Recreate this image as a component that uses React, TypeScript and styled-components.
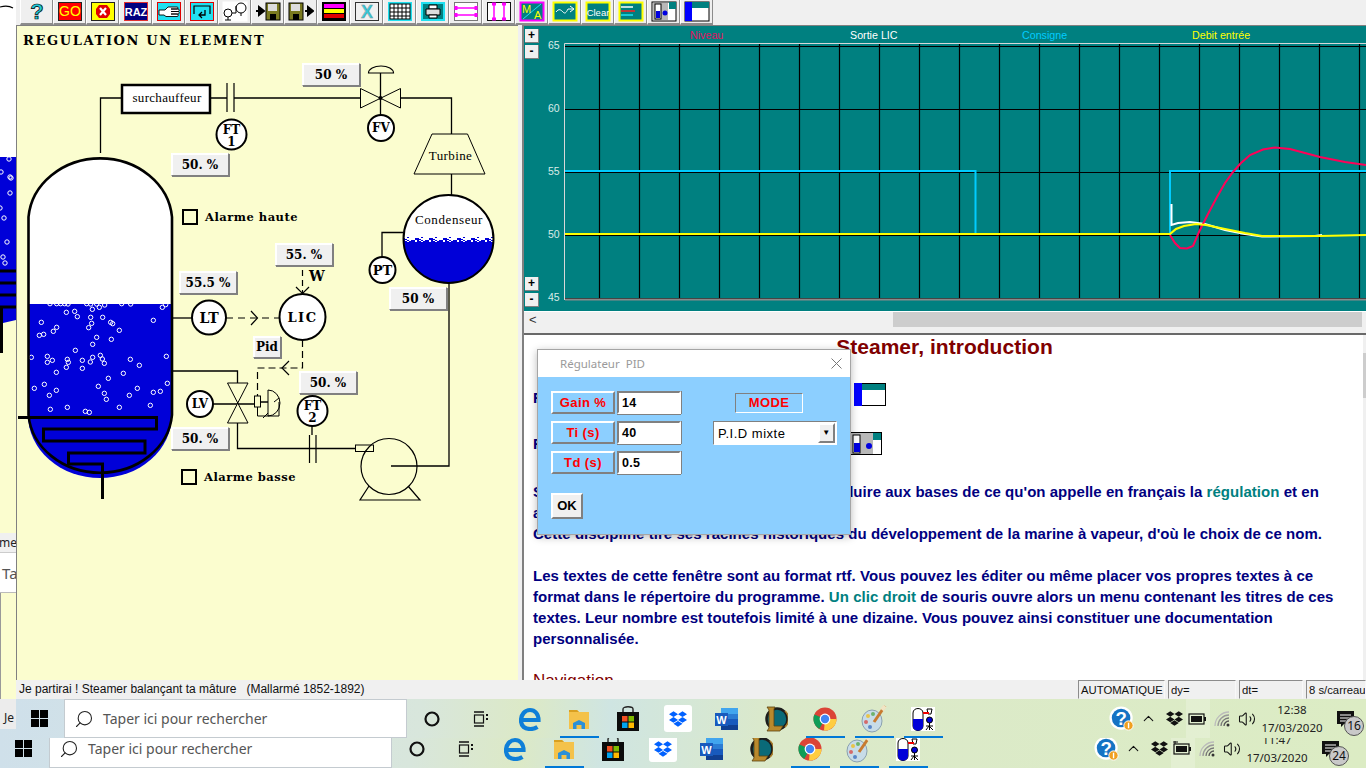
import React from "react";
import styled, { createGlobalStyle } from "styled-components";
import { FaDropbox } from "react-icons/fa";
import { ChevronUp, Search, Volume2 } from "lucide-react";

const GlobalStyle = createGlobalStyle`
  html, body { margin: 0; padding: 0; overflow: hidden; background: #f0f0f0; }
  * { box-sizing: border-box; }
`;

const SLAB = `"DejaVu Serif", "Liberation Serif", serif`;
const UI = `"Noto Sans", "Open Sans", sans-serif`;
const ARIAL = `"Liberation Sans", Arial, sans-serif`;
const PANEL_YELLOW = "#fbfdcf";
const WATER = "#0000d8";

/* bubbles read off the reference, in vessel coords */
const BUBBLES = [
  [199, 37], [224, 34], [232, 50], [277, 28], [272, 52], [298, 22], [314, 15], [308, 52], [487, 22], [124, 67],
  [460, 61], [170, 82], [160, 94], [131, 103], [118, 106], [275, 70], [266, 83], [332, 67], [338, 71], [358, 91],
  [290, 112], [278, 133], [334, 118], [226, 151], [94, 172], [142, 169], [142, 187], [157, 181], [202, 178], [205, 187],
  [199, 202], [169, 217], [247, 181], [247, 205], [278, 172], [271, 186], [301, 166], [307, 177], [313, 190], [391, 178],
  [418, 196], [499, 169], [370, 220], [325, 235], [502, 250], [133, 253], [103, 265], [169, 271], [148, 286], [295, 259],
  [313, 280], [319, 298], [388, 286], [412, 265], [460, 277], [481, 274], [151, 328], [202, 322], [256, 334], [268, 337],
  [358, 322], [451, 316], [150, 11], [170, 11], [182, 11], [194, 11], [204, 12], [260, 11], [272, 12], [290, 12], [365, 11], [392, 12],
  [497, 14],
];

const STRIP_BUBBLES = [
  [9, 159], [1, 172], [10, 177], [11, 178], [10, 193], [0, 208], [4, 218], [7, 242], [3, 257], [5, 263],
];

const Page = styled.div`
  position: relative;
  width: 1366px;
  height: 768px;
  overflow: hidden;
  display: flex;
  flex-direction: column;
  font-family: ${ARIAL};
`;

const TopBlock = styled.div`
  display: flex;
  align-items: flex-start;
  height: 738px;
  flex: none;
`;

const LeftStrip = styled.div`
  width: 16px;
  height: 729px;
  flex: none;
  display: flex;
  flex-direction: column;
  background: ${PANEL_YELLOW};
`;

const StripArt = styled.svg`
  display: block;
  flex: none;
`;

const StripMenu = styled.div`
  height: 20px;
  flex: none;
  background: #f0f0f0;
  border-bottom: 1px solid #ccc;
  font: 12px/20px ${UI};
  color: #222;
  overflow: hidden;
  white-space: nowrap;
  text-indent: -1px;
`;

const StripSearch = styled.div`
  height: 40px;
  flex: none;
  background: #fff;
  border-bottom: 1px solid #bbb;
  font: 15px/40px ${UI};
  color: #555;
  overflow: hidden;
  padding-left: 2px;
`;

const StripRest = styled.div`
  flex: 1;
  border-left: 1px solid #999;
`;

const StripStatus = styled.div`
  height: 30px;
  flex: none;
  background: #ececec;
  font: 12px/38px ${UI};
  color: #222;
  padding-left: 4px;
  overflow: hidden;
`;

const Workspace = styled.div`
  position: relative;
  z-index: 1;
  width: 1350px;
  height: 738px;
  flex: none;
  display: flex;
  flex-direction: column;
`;

const ToolRow = styled.div`
  height: 25px;
  flex: none;
  display: flex;
  padding-left: 4px;
  background: #f0f0f0;
`;

const ToolButton = styled.div`
  width: 33px;
  height: 25px;
  flex: none;
  display: flex;
  align-items: center;
  justify-content: center;
  background: #efefef;
  border-left: 1px solid #fff;
  border-right: 1px solid #8c8c8c;
  border-bottom: 2px solid #8c8c8c;
`;

const ToolSvg = styled.svg`
  display: block;
`;

const Main = styled.div`
  height: 655px;
  flex: none;
  display: flex;
  background: #f0f0f0;
`;

const DiagramPanel = styled.div`
  position: relative;
  width: 502px;
  flex: none;
  background: ${PANEL_YELLOW};
  border-left: 1px solid #808080;
  border-top: 1px solid #808080;
`;

const DiagramArt = styled.svg`
  display: block;
`;

const DiagramTitle = styled.div`
  position: absolute;
  left: 6px;
  top: 6px;
  font: bold 13px/18px ${SLAB};
  letter-spacing: 1.65px;
  white-space: nowrap;
  color: #000;
`;

const ValueBox = styled.div<{ $x: number; $y: number; $w?: number; $h?: number }>`
  position: absolute;
  left: ${(p) => p.$x}px;
  top: ${(p) => p.$y}px;
  width: ${(p) => p.$w ?? 58}px;
  height: ${(p) => p.$h ?? 23}px;
  display: flex;
  align-items: center;
  justify-content: center;
  background: #f0f0f0;
  border: 1px solid;
  border-color: #fff #808080 #808080 #fff;
  box-shadow: 1px 1px 0 #808080, inset 1px 1px 0 #fff;
  font: bold 12px ${SLAB};
  color: #000;
  white-space: nowrap;
`;

const Alarm = styled.div<{ $x: number; $y: number }>`
  position: absolute;
  left: ${(p) => p.$x}px;
  top: ${(p) => p.$y}px;
  display: flex;
  align-items: center;
  gap: 7px;
  font: bold 11.5px/15px ${SLAB};
  letter-spacing: 0.5px;
  color: #000;
  white-space: nowrap;
`;

const AlarmBox = styled.span`
  display: block;
  width: 16px;
  height: 16px;
  border: 2px solid #000;
  background: ${PANEL_YELLOW};
`;

const Gutter = styled.div`
  width: 4px;
  flex: none;
  background: #f0f0f0;
`;

const RightPane = styled.div`
  flex: 1;
  min-width: 0;
  display: flex;
  flex-direction: column;
  border-left: 2px solid #808080;
`;

const Trend = styled.div`
  height: 286px;
  flex: none;
  display: flex;
  background: #008080;
  border-top: 1px solid #808080;
`;

const ZoomRail = styled.div`
  width: 17px;
  flex: none;
  display: flex;
  flex-direction: column;
  justify-content: space-between;
  padding: 3px 0 4px 1px;
`;

const ZoomGroup = styled.div`
  display: flex;
  flex-direction: column;
  gap: 2px;
`;

const ZoomButton = styled.div`
  width: 14px;
  height: 14px;
  background: #f0f0f0;
  border-right: 1px solid #808080;
  border-bottom: 1px solid #808080;
  font: bold 12px/13px ${ARIAL};
  text-align: center;
  color: #000;
`;

const TrendArt = styled.svg`
  display: block;
  flex: none;
`;

const HScroll = styled.div`
  height: 22px;
  flex: none;
  display: flex;
  background: #f0f0f0;
  border-top: 1px solid #fff;
`;

const HScrollArrow = styled.div`
  width: 369px;
  flex: none;
  font: 13px/15px ${ARIAL};
  padding-left: 5px;
  color: #333;
`;

const HScrollThumb = styled.div`
  width: 469px;
  height: 15px;
  background: #cdcdcd;
`;

const DocPane = styled.div`
  flex: 1;
  min-height: 0;
  display: flex;
  background: #fff;
  border-top: 2px solid #696969;
`;

const DocBody = styled.div`
  flex: 1;
  min-width: 0;
  overflow: hidden;
  padding-left: 9px;
  color: #000080;
  font: bold 15px/21px ${ARIAL};
  letter-spacing: 0.04px;
`;

const DocTitle = styled.div`
  font: bold 21px/24px ${ARIAL};
  color: #800000;
  text-align: center;
  padding-right: 7px;
`;

const IconRow = styled.div<{ $top: number; $align: string }>`
  margin-top: ${(p) => p.$top}px;
  height: 23px;
  display: flex;
  align-items: ${(p) => p.$align};
  line-height: 16px;
`;

const RowLabel = styled.span<{ $slot: number }>`
  width: ${(p) => p.$slot}px;
  flex: none;
`;

const DocParagraphs = styled.div`
  margin-top: 26px;
  white-space: nowrap;
`;

const DocGap = styled.div`
  height: 21px;
`;

const Accent = styled.span`
  color: #008080;
`;

const DocHeading = styled.div`
  margin-top: 20px;
  font: 17px/24px ${ARIAL};
  color: #800000;
`;

const DocScroll = styled.div`
  width: 3px;
  flex: none;
  background: #f0f0f0;
`;

const DocThumb = styled.div`
  margin-top: 18px;
  height: 45px;
  background: #cdcdcd;
`;

const StatusBar = styled.div`
  height: 19px;
  flex: none;
  display: flex;
  background: #f0f0f0;
  font: 12px/18px ${ARIAL};
  color: #111;
`;

const StatusMessage = styled.div`
  flex: 1;
  padding-left: 3px;
  white-space: pre;
`;

const StatusCell = styled.div<{ $w: number; $center?: boolean }>`
  width: ${(p) => p.$w}px;
  flex: none;
  margin-left: 3px;
  padding-left: 2px;
  border: 1px solid;
  border-color: #8c8c8c #f8f8f8 transparent #8c8c8c;
  font-size: 11.3px;
  white-space: nowrap;
  overflow: hidden;
  text-align: ${(p) => (p.$center ? "center" : "left")};
`;

const Bar = styled.div<{ $lower?: boolean }>`
  position: relative;
  display: flex;
  align-items: center;
  height: 39px;
  flex: none;
  background: linear-gradient(
    90deg,
    #cfe0ea 0%,
    #d8e6dc 30%,
    #dce9c6 38%,
    #cfe5e2 44%,
    #dbe9ca 56%,
    #dcecc4 100%
  );
  padding-right: ${(p) => (p.$lower ? 15 : 0)}px;
  ${(p) => p.$lower && "margin-top: -9px;"}
`;

const WinSlot = styled.div<{ $w: number }>`
  width: ${(p) => p.$w}px;
  flex: none;
  display: flex;
  justify-content: center;
  padding-right: 2px;
`;

const SearchBox = styled.div`
  width: 343px;
  height: 39px;
  flex: none;
  display: flex;
  align-items: center;
  gap: 9px;
  padding-left: 9px;
  background: #fff;
  border: 1px solid #c4cbd0;
  font: 14px ${UI};
  color: #555;
  white-space: nowrap;
`;

const Magnifier = styled(Search)`
  transform: scaleX(-1);
`;

const AppSlot = styled.div<{ $active?: boolean }>`
  width: 49.2px;
  height: 39px;
  flex: none;
  display: flex;
  align-items: center;
  justify-content: center;
  position: relative;
  &::after {
    content: "";
    display: ${(p) => (p.$active ? "block" : "none")};
    position: absolute;
    left: 5px;
    right: 5px;
    bottom: 0;
    height: 2px;
    background: #0078d7;
  }
`;

const Tray = styled.div`
  margin-left: auto;
  display: flex;
  align-items: center;
  height: 39px;
`;

const TraySlot = styled.div<{ $w: number; $lit?: boolean }>`
  position: relative;
  width: ${(p) => p.$w}px;
  height: 39px;
  flex: none;
  display: flex;
  align-items: center;
  justify-content: center;
  background: ${(p) => (p.$lit ? "rgba(255,255,255,0.22)" : "transparent")};
`;

const Clock = styled.div`
  text-align: center;
  font: 11.5px/18px ${UI};
  color: #222;
  white-space: nowrap;
  margin-top: 1px;
`;

const NoteBadge = styled.span`
  position: absolute;
  left: 18px;
  top: 17px;
  width: 20px;
  height: 20px;
  border-radius: 50%;
  background: #c9c9c9;
  border: 1px solid #555;
  font: 12px/18px ${UI};
  text-align: center;
  color: #111;
`;

const Dialog = styled.div`
  position: absolute;
  left: 537px;
  top: 349px;
  width: 314px;
  height: 186px;
  display: flex;
  flex-direction: column;
  z-index: 5;
  background: #8ccfff;
  border: 1px solid #a5a5a5;
  box-shadow: 0 2px 8px rgba(0, 0, 0, 0.28);
`;

const DialogHead = styled.div`
  height: 27px;
  flex: none;
  display: flex;
  align-items: center;
  justify-content: space-between;
  padding: 0 8px 0 22px;
  background: #fff;
  font: 11.5px ${UI};
  color: #9a9a9a;
  white-space: pre;
`;

const DialogBody = styled.div`
  flex: 1;
  display: flex;
  padding: 14px 0 0 13px;
`;

const FieldColumn = styled.div`
  display: flex;
  flex-direction: column;
  gap: 7px;
`;

const FieldRow = styled.div`
  display: flex;
  gap: 2px;
`;

const raised = `
  border: 2px solid;
  border-color: #fff #808080 #808080 #fff;
`;

const FieldLabel = styled.div`
  ${raised}
  width: 64px;
  height: 23px;
  text-align: center;
  background: #8ccfff;
  font: bold 13px/19px ${ARIAL};
  letter-spacing: 0.4px;
  color: #ff0000;
`;

const FieldInput = styled.div`
  width: 64px;
  height: 23px;
  padding-left: 3px;
  border: 2px solid;
  border-color: #808080 #fff #fff #808080;
  background: #fff;
  box-shadow: 0 1px 0 #808080, 1px 0 0 #808080;
  font: bold 12.5px/20px ${ARIAL};
  letter-spacing: 0.3px;
  color: #000;
`;

const OkButton = styled.div`
  ${raised}
  width: 32px;
  height: 26px;
  margin-top: 19px;
  background: #f0f0f0;
  font: bold 13px/21px ${ARIAL};
  text-align: center;
  color: #000;
`;

const ModeColumn = styled.div`
  margin-left: 32px;
  display: flex;
  flex-direction: column;
  align-items: flex-start;
`;

const ModeLabel = styled.div`
  width: 68px;
  height: 20px;
  margin: 2px 0 0 22px;
  border: 1px solid;
  border-color: #808080 #fff #fff #808080;
  font: bold 13px/18px ${ARIAL};
  letter-spacing: 0.4px;
  text-align: center;
  color: #ff0000;
`;

const ModeSelect = styled.div`
  width: 124px;
  height: 24px;
  margin-top: 8px;
  display: flex;
  align-items: center;
  justify-content: space-between;
  padding: 1px 1px 1px 4px;
  border: 1px solid;
  border-color: #808080 #fff #fff #808080;
  background: #fff;
  font: 13px ${ARIAL};
  letter-spacing: 0.5px;
  color: #000;
`;

const SelectArrow = styled.span`
  ${raised}
  width: 17px;
  height: 20px;
  background: #f0f0f0;
  font: 8px/15px ${ARIAL};
  text-align: center;
`;

type ToolProps = { children: React.ReactNode };

const Ico: React.FC<ToolProps> = ({ children }) => (
  <ToolSvg width={26} height={21} viewBox="0 0 26 21">
    {children}
  </ToolSvg>
);

const label = (t: string, fill: string, size = 12, weight = 700) => (
  <text x={13} y={15} textAnchor="middle" fontFamily={ARIAL} fontSize={size} fontWeight={weight} fill={fill}>
    {t}
  </text>
);

const TOOL_ICONS: React.ReactNode[] = [
  <Ico>
    <text x={13} y={18} textAnchor="middle" fontFamily={ARIAL} fontSize={22} fontWeight={700} fill="#20c8d8" stroke="#000" strokeWidth={0.7}>
      ?
    </text>
  </Ico>,
  <Ico>
    <rect x={1.5} y={1.5} width={23} height={18} fill="#ff0000" stroke="#222" />
    {label("GO", "#ffff00", 14, 400)}
  </Ico>,
  <Ico>
    <rect x={1.5} y={1.5} width={23} height={18} fill="#ffff00" stroke="#222" />
    <polygon points="9,4 17,4 20,8 20,13 17,17 9,17 6,13 6,8" fill="#e00000" />
    <path d="M10 7l6 7M16 7l-6 7" stroke="#fff" strokeWidth={2.2} />
  </Ico>,
  <Ico>
    <rect x={1.5} y={1.5} width={23} height={18} fill="#000080" stroke="#e03030" />
    {label("RAZ", "#fff", 11)}
  </Ico>,
  <Ico>
    <rect x={1.5} y={1.5} width={23} height={18} fill="#20e0f0" stroke="#e00000" />
    <path d="M3 9h6l3-3h9a1 1 0 0 1 0 2h-6h7a1 1 0 0 1 0 2.5h-7h7a1 1 0 0 1 0 2.5h-7h6a1 1 0 0 1 0 2.5H10l-2-1.5H3z" fill="#fff" stroke="#000" strokeWidth={0.9} />
  </Ico>,
  <Ico>
    <rect x={1.5} y={1.5} width={23} height={18} fill="#20e0f0" stroke="#e00000" />
    <path d="M5 13V5h16v8" fill="none" stroke="#000" strokeWidth={1.2} />
    <path d="M16 9v5h-6M13 11l-3 3 3 3" fill="none" stroke="#000" strokeWidth={1.3} />
  </Ico>,
  <Ico>
    <rect x={0.5} y={0.5} width={25} height={20} fill="#fff" />
    <circle cx={6} cy={12} r={4} fill="#fff" stroke="#000" />
    <circle cx={19} cy={7} r={5} fill="#fff" stroke="#000" />
    <path d="M10 12h4V5M6 16v3M3 19h6M19 12v3" fill="none" stroke="#000" />
  </Ico>,
  <Ico>
    <path d="M1 10h5M4 6l5 4-5 4z" stroke="#000" strokeWidth={2} />
    <rect x={11} y={2} width={14} height={17} fill="#7a7a20" stroke="#000" />
    <rect x={13} y={3} width={9} height={7} fill="#ddd" />
    <rect x={15} y={13} width={6} height={6} fill="#000" />
  </Ico>,
  <Ico>
    <rect x={1} y={2} width={14} height={17} fill="#7a7a20" stroke="#000" />
    <rect x={3} y={3} width={9} height={7} fill="#ddd" />
    <rect x={5} y={13} width={6} height={6} fill="#000" />
    <path d="M17 10h4M20 6l5 4-5 4z" stroke="#000" strokeWidth={2} />
  </Ico>,
  <Ico>
    <rect x={1} y={1} width={24} height={19} fill="#000" />
    <rect x={3} y={3} width={20} height={4} fill="#ff00ff" />
    <rect x={3} y={8} width={20} height={4} fill="#ffff00" />
    <rect x={3} y={13} width={20} height={4} fill="#e00000" />
  </Ico>,
  <Ico>
    <rect x={1.5} y={1.5} width={23} height={18} fill="#f0f0f0" stroke="#333" />
    <text x={13} y={17} textAnchor="middle" fontFamily={ARIAL} fontSize={18} fontWeight={700} fill="#35c8d8" stroke="#8a8a8a" strokeWidth={0.4}>
      X
    </text>
  </Ico>,
  <Ico>
    <rect x={1} y={1} width={24} height={19} fill="#20e0f0" />
    <rect x={3} y={3} width={20} height={15} fill="#fff" stroke="#000" />
    <path d="M7 3v15M11 3v15M15 3v15M19 3v15M3 7h20M3 11h20M3 15h20" stroke="#000" strokeWidth={1} />
  </Ico>,
  <Ico>
    <rect x={1} y={1} width={24} height={19} fill="#20e0f0" />
    <rect x={3} y={3} width={20} height={15} fill="#008080" />
    <path d="M9 4h8v4H9z" fill="#fff" stroke="#000" />
    <path d="M6 8h14v6H6z" fill="#ddd" stroke="#000" />
    <path d="M9 14h8v3H9z" fill="#fff" stroke="#000" />
  </Ico>,
  <Ico>
    <rect x={1.5} y={1.5} width={23} height={18} fill="#fff" stroke="#777" />
    <path d="M3 7h20M3 14h20" stroke="#ff00ff" strokeWidth={1.5} />
    <path d="M3 5v4M23 5v4M3 12v4M23 12v4" stroke="#ff00ff" strokeWidth={3} />
  </Ico>,
  <Ico>
    <rect x={1.5} y={1.5} width={23} height={18} fill="#fff" stroke="#111" />
    <path d="M8 3v15M18 3v15" stroke="#ff00ff" strokeWidth={1.5} />
    <path d="M6 3h4M16 3h4M6 18h4M16 18h4" stroke="#ff00ff" strokeWidth={3} />
  </Ico>,
  <Ico>
    <rect x={1.5} y={1.5} width={23} height={18} fill="#008080" stroke="#ff00ff" strokeWidth={2} />
    <path d="M4 18L22 3" stroke="#20e0f0" strokeWidth={1} />
    <text x={3} y={12} fontFamily={ARIAL} fontSize={11} fill="#ffff00">M</text>
    <text x={15} y={18} fontFamily={ARIAL} fontSize={11} fill="#ffff00">A</text>
  </Ico>,
  <Ico>
    <rect x={1.5} y={1.5} width={23} height={18} fill="#008080" stroke="#ffff00" strokeWidth={2} />
    <path d="M4 11c3-4 5-2 7 0s3 1 5-3h5M18 5l4 3-4 3" fill="none" stroke="#fff" strokeWidth={1} />
  </Ico>,
  <Ico>
    <rect x={1.5} y={1.5} width={23} height={18} fill="#008080" stroke="#ffff00" strokeWidth={2} />
    {label("Clear", "#fff", 9.5, 400)}
  </Ico>,
  <Ico>
    <rect x={1.5} y={1.5} width={23} height={18} fill="#008080" stroke="#ffff00" strokeWidth={2} />
    <path d="M3 6h12" stroke="#fff" strokeWidth={1.5} />
    <path d="M3 10h14" stroke="#ff2020" strokeWidth={1.5} />
    <path d="M3 14h12" stroke="#20e0f0" strokeWidth={1.5} />
  </Ico>,
  <Ico>
    <rect x={1} y={1} width={24} height={19} fill="#fff" stroke="#000" />
    <rect x={2} y={2} width={15} height={17} fill="#b8b8b8" />
    <rect x={4} y={3} width={6} height={15} fill="#fff" stroke="#000" />
    <rect x={5} y={10} width={4} height={7} fill="#0000e0" />
    <circle cx={14} cy={12} r={2.5} fill="#0000e0" />
    <rect x={18} y={1} width={7} height={7} fill="#008080" />
  </Ico>,
  <Ico>
    <rect x={1} y={1} width={24} height={19} fill="#fff" stroke="#000" />
    <rect x={1} y={1} width={7} height={19} fill="#0000ff" />
    <rect x={8} y={1} width={17} height={6} fill="#008080" />
  </Ico>,
];

/* ---- taskbar icons ---- */

const WinLogo = () => (
  <svg width={17} height={17} viewBox="0 0 17 17">
    <path d="M0 0h8v8H0zM9 0h8v8H9zM0 9h8v8H0zM9 9h8v8H9z" fill="#000" />
  </svg>
);

const CortanaIcon = () => (
  <svg width={16} height={16} viewBox="0 0 16 16">
    <circle cx={8} cy={8} r={6.5} fill="none" stroke="#111" strokeWidth={2.2} />
  </svg>
);

const TaskViewIcon = () => (
  <svg width={17} height={16} viewBox="0 0 17 16">
    <path d="M2 1h10M2 15h10" stroke="#111" strokeWidth={1.4} />
    <rect x={2.5} y={4} width={9} height={8} fill="none" stroke="#111" strokeWidth={1.2} />
    <path d="M14 4h2M14 8h2" stroke="#111" strokeWidth={2} />
  </svg>
);

const EdgeIcon = () => (
  <svg width={22} height={24} viewBox="0 0 22 24">
    <path d="M3 13h16.5c0-6-3.5-10-8.5-10S2 7.5 2 13.5 6 22 11.5 22c3 0 5-.8 7-2" fill="none" stroke="#0f7fd8" strokeWidth={4.2} />
  </svg>
);

const ExplorerIcon = () => (
  <svg width={22} height={22} viewBox="0 0 22 22">
    <path d="M1 2h8l2 2h10v17H1z" fill="#f4c24a" />
    <path d="M1 2h8l2 2H1z" fill="#d9a021" />
    <path d="M5 15l6-3 6 3v6H5z" fill="#2b90d9" />
    <rect x={8.5} y={17} width={5} height={4} fill="#f4c24a" />
  </svg>
);

const StoreIcon = () => (
  <svg width={24} height={26} viewBox="0 0 24 26">
    <path d="M7 6V3c0-3 10-3 10 0v3" fill="none" stroke="#222" strokeWidth={1.4} />
    <rect x={1} y={6} width={22} height={19} fill="#0b0b0b" />
    <rect x={6} y={10} width={5.5} height={5.5} fill="#f25022" />
    <rect x={12.5} y={10} width={5.5} height={5.5} fill="#7fba00" />
    <rect x={6} y={16.5} width={5.5} height={5.5} fill="#00a4ef" />
    <rect x={12.5} y={16.5} width={5.5} height={5.5} fill="#ffb900" />
  </svg>
);

const DropTile = styled.span`
  display: flex;
  align-items: center;
  justify-content: center;
  width: 28px;
  height: 27px;
  background: #fff;
  border-radius: 3px;
  color: #0061ff;
`;

const WordIcon = () => (
  <svg width={24} height={24} viewBox="0 0 24 24">
    <rect x={6} y={1} width={17} height={22} fill="#2b7cd3" />
    <rect x={6} y={1} width={17} height={6} fill="#41a5ee" />
    <rect x={6} y={12} width={17} height={6} fill="#185abd" />
    <rect x={6} y={18} width={17} height={5} fill="#103f91" />
    <rect x={0} y={6} width={13} height={13} fill="#185abd" />
    <text x={6.5} y={16.5} textAnchor="middle" fontFamily={ARIAL} fontSize={11} fontWeight={700} fill="#fff">
      W
    </text>
  </svg>
);

const LolIcon = () => (
  <svg width={24} height={28} viewBox="0 0 24 28">
    <circle cx={13} cy={14} r={10.5} fill="#0a6a78" stroke="#1c1c1c" strokeWidth={2.5} />
    <path d="M21 6a11 11 0 0 1 0 16" fill="none" stroke="#a87c2a" strokeWidth={1.5} />
    <path d="M3 2h8l-1 2v17h9l-3 5H3l2-3V5z" fill="#b8892d" stroke="#5c4310" strokeWidth={0.8} />
  </svg>
);

const ChromeIcon = () => (
  <svg width={24} height={24} viewBox="0 0 24 24">
    <circle cx={12} cy={12} r={11.5} fill="#db4437" />
    <path d="M12 12l-5.8 10A11.5 11.5 0 0 1 1.4 7.5z" fill="#0f9d58" />
    <path d="M12 12h11.5A11.5 11.5 0 0 1 11 23.5z" fill="#ffcd40" />
    <circle cx={12} cy={12} r={5.4} fill="#fff" />
    <circle cx={12} cy={12} r={4.2} fill="#4285f4" />
  </svg>
);

const PaintIcon = () => (
  <svg width={26} height={28} viewBox="0 0 26 28">
    <ellipse cx={11} cy={16} rx={10} ry={11} fill="#c8dce8" stroke="#8aa0b0" />
    <circle cx={7} cy={11} r={2} fill="#e8c44a" />
    <circle cx={12} cy={9} r={2} fill="#6db36d" />
    <circle cx={5} cy={17} r={2} fill="#d46a6a" />
    <circle cx={9} cy={22} r={2} fill="#5a86c8" />
    <path d="M24 1L13 17" stroke="#c87b30" strokeWidth={3} />
    <path d="M24 1l-3 4" stroke="#f0e4c4" strokeWidth={4} />
  </svg>
);

const SteamerIcon = () => (
  <svg width={24} height={24} viewBox="0 0 24 24">
    <rect width={24} height={24} fill="#fff" />
    <path d="M2 6c0-6 10-6 10 0v13c0 6-10 6-10 0z" fill="#fff" stroke="#000" />
    <path d="M2 12h10v7c0 6-10 6-10 0z" fill="#0000d8" />
    <path d="M16 2h5l-1 5h-3z" fill="#fff" stroke="#000" />
    <circle cx={18.5} cy={13} r={3} fill="#0000d8" stroke="#000" />
    <path d="M18.5 16v7M15 19h7M15 23l3-4 4 4" stroke="#000" fill="none" />
    <path d="M12 6h6" stroke="#e00" strokeWidth={2} />
  </svg>
);

const HelpIcon = () => (
  <svg width={28} height={28} viewBox="0 0 28 28">
    <circle cx={13} cy={13} r={12.5} fill="#fff" />
    <circle cx={13} cy={13} r={10} fill="#1573c4" />
    <text x={13} y={20} textAnchor="middle" fontFamily={ARIAL} fontSize={20} fontWeight={700} fill="#fff">
      ?
    </text>
    <circle cx={21} cy={21} r={5} fill="#f0a020" stroke="#fff" />
    <rect x={20.3} y={18} width={1.5} height={6} fill="#fff" />
  </svg>
);

const BatteryIcon: React.FC<{ plugged?: boolean }> = ({ plugged }) => (
  <svg width={20} height={16} viewBox="0 0 20 16">
    <rect x={1} y={3} width={15} height={10} fill="none" stroke="#111" strokeWidth={1.2} />
    <rect x={3} y={5} width={11} height={6} fill="#111" />
    <rect x={16} y={6} width={2} height={4} fill="#111" />
    {plugged && <path d="M0 1h5M2 0v3" stroke="#111" strokeWidth={1} />}
  </svg>
);

const WifiIcon = () => (
  <svg width={18} height={16} viewBox="0 0 18 16">
    <path d="M1 15A14 14 0 0 1 15 1" fill="none" stroke="#bbb" strokeWidth={1.3} />
    <path d="M4 15A11 11 0 0 1 15 4" fill="none" stroke="#999" strokeWidth={1.3} />
    <path d="M7 15a8 8 0 0 1 8-8" fill="none" stroke="#777" strokeWidth={1.3} />
    <path d="M10 15a5 5 0 0 1 5-5" fill="none" stroke="#555" strokeWidth={1.3} />
    <circle cx={14} cy={14} r={1.5} fill="#333" />
  </svg>
);

const NoteIcon = () => (
  <svg width={20} height={20} viewBox="0 0 20 20">
    <path d="M1 2h17v13H8l-3 3v-3H1z" fill="#111" />
    <path d="M4 6h11M4 9h11M4 12h7" stroke="#fff" strokeWidth={1} />
  </svg>
);

type TaskbarProps = { lower?: boolean; time: string; badge: string };

const Taskbar: React.FC<TaskbarProps> = ({ lower, time, badge }) => (
  <Bar $lower={lower}>
    <WinSlot $w={lower ? 49 : 48}>
      <WinLogo />
    </WinSlot>
    <SearchBox>
      <Magnifier size={20} strokeWidth={1.3} color="#222" />
      Taper ici pour rechercher
    </SearchBox>
    <AppSlot>
      <CortanaIcon />
    </AppSlot>
    <AppSlot>
      <TaskViewIcon />
    </AppSlot>
    <AppSlot>
      <EdgeIcon />
    </AppSlot>
    <AppSlot $active>
      <ExplorerIcon />
    </AppSlot>
    <AppSlot>
      <StoreIcon />
    </AppSlot>
    <AppSlot>
      <DropTile>
        <FaDropbox size={18} />
      </DropTile>
    </AppSlot>
    <AppSlot>
      <WordIcon />
    </AppSlot>
    <AppSlot>
      <LolIcon />
    </AppSlot>
    <AppSlot $active>
      <ChromeIcon />
    </AppSlot>
    <AppSlot $active>
      <PaintIcon />
    </AppSlot>
    <AppSlot $active>
      <SteamerIcon />
    </AppSlot>
    <Tray>
      <TraySlot $w={26}>
        <HelpIcon />
      </TraySlot>
      <TraySlot $w={27}>
        <ChevronUp size={17} strokeWidth={1.5} color="#111" />
      </TraySlot>
      <TraySlot $w={24}>
        <FaDropbox size={17} color="#111" />
      </TraySlot>
      <TraySlot $w={24} $lit>
        <BatteryIcon plugged={lower} />
      </TraySlot>
      <TraySlot $w={26}>
        <WifiIcon />
      </TraySlot>
      <TraySlot $w={22}>
        <Volume2 size={18} strokeWidth={1.4} color="#111" />
      </TraySlot>
      <TraySlot $w={68}>
        <Clock>
          {time}
          <br />
          17/03/2020
        </Clock>
      </TraySlot>
      <TraySlot $w={40}>
        <NoteIcon />
        <NoteBadge>{badge}</NoteBadge>
      </TraySlot>
    </Tray>
  </Bar>
);

/* ---- process diagram, drawn in page coordinates ---- */

const dither = () => {
  const out: React.ReactNode[] = [];
  for (let x = 403; x < 494; x += 2) {
    for (let y = 236; y < 244; y += 1) {
      const keep = (x * 31 + y * 17 + x * y) % 7 < 7 - (y - 236);
      if (keep) {
        out.push(<rect key={`${x}-${y}`} x={x} y={y} width={2} height={1} fill="#fff" />);
      }
    }
  }
  return out;
};

const Instrument: React.FC<{ cx: number; cy: number; r: number; t: string; sub?: string; size?: number; track?: number }> = ({
  cx,
  cy,
  r,
  t,
  sub,
  size = 13,
  track = 0,
}) => (
  <g>
    <circle cx={cx} cy={cy} r={r} fill="#fff" stroke="#000" strokeWidth={2} />
    <text
      x={cx}
      y={sub ? cy - 1 : cy + size * 0.36}
      textAnchor="middle"
      fontFamily={SLAB}
      fontWeight={700}
      fontSize={size}
      letterSpacing={track}
      fill="#000"
    >
      {t}
    </text>
    {sub && (
      <text x={cx} y={cy + 11} textAnchor="middle" fontFamily={SLAB} fontWeight={700} fontSize={size} fill="#000">
        {sub}
      </text>
    )}
  </g>
);

const Diagram = () => (
  <DiagramArt width={501} height={654} viewBox="17 26 501 654">
    <defs>
      <clipPath id="vessel-water">
        <path d="M28 304H172V415A72 63 0 0 1 28 415Z" />
      </clipPath>
      <clipPath id="condenser">
        <ellipse cx={448.5} cy={239} rx={45} ry={44} />
      </clipPath>
    </defs>
    {/* pipes */}
    <g fill="none" stroke="#000" strokeWidth={1.3}>
      <path d="M100.5 153V98H122M210 98H227M234 98H360M400 98H451.5V134M451.5 174V195" />
      <path d="M403 232.5H382V257M449 283V466H391" />
      <path d="M172 371H237.5V383M237.5 423V448.5H355M213 404H254M261 402H268" />
      <path d="M172 318H192" />
      <path d="M312 426V435M380.5 73V115" />
    </g>
    {/* vessel */}
    <path d="M28.5 217A72 64 0 0 1 172 217V415A72 63 0 0 1 28.5 415Z" fill="#fff" />
    <rect x={28} y={304} width={144} height={180} fill={WATER} clipPath="url(#vessel-water)" />
    <g clipPath="url(#vessel-water)" fill="none" stroke="#fff" strokeWidth={1}>
      {BUBBLES.map(([x, y], i) => (
        <circle key={i} cx={x / 3} cy={300 + y / 3} r={2.2} />
      ))}
    </g>
    <path d="M28.5 217A72 64 0 0 1 172 217V415A72 63 0 0 1 28.5 415Z" fill="none" stroke="#000" strokeWidth={2.6} />
    <path d="M18 417.5H156.5V429H43.5V441H145V453H68.5V464H102.5V499" fill="none" stroke="#000" strokeWidth={3} />
    {/* top line */}
    <rect x={122} y={85} width={88} height={28} fill="#fff" stroke="#000" strokeWidth={2.5} />
    <text x={167} y={102} textAnchor="middle" fontFamily="Liberation Serif" fontSize={13} letterSpacing={0.3}>
      surchauffeur
    </text>
    <path d="M227 83V112M234 83V112" stroke="#000" strokeWidth={1.2} />
    {/* control valve FV */}
    <path d="M360.5 88.5V108L400.5 88.5V108Z" fill={PANEL_YELLOW} stroke="#000" strokeWidth={1} />
    <circle cx={380.5} cy={98} r={2} fill="#000" />
    <path d="M368.5 73a12.5 7 0 0 1 25 0Z" fill={PANEL_YELLOW} stroke="#000" strokeWidth={1.2} />
    <Instrument cx={381} cy={128} r={13} t="FV" size={12} />
    <Instrument cx={231.5} cy={134.5} r={15} t="FT" sub="1" size={12} />
    {/* turbine */}
    <path d="M432 134H467.5L485 174H414Z" fill={PANEL_YELLOW} stroke="#000" strokeWidth={1} />
    <text x={450.5} y={160} textAnchor="middle" fontFamily="Liberation Serif" fontSize={13} letterSpacing={0.4}>
      Turbine
    </text>
    {/* condenser */}
    <ellipse cx={448.5} cy={239} rx={45} ry={44} fill="#fff" />
    <g clipPath="url(#condenser)">
      <rect x={403} y={236} width={91} height={48} fill={WATER} />
      {dither()}
    </g>
    <ellipse cx={448.5} cy={239} rx={45} ry={44} fill="none" stroke="#000" strokeWidth={2} />
    <text x={449} y={224} textAnchor="middle" fontFamily="Liberation Serif" fontSize={13} letterSpacing={0.6}>
      Condenseur
    </text>
    <Instrument cx={382.5} cy={270} r={13} t="PT" />
    {/* level loop */}
    <Instrument cx={209} cy={317.5} r={17} t="LT" size={14} />
    <Instrument cx={302.5} cy={317} r={23} t="LIC" size={13} track={1.5} />
    <g fill="none" stroke="#000" strokeWidth={1.2}>
      <path d="M226 318H279" strokeDasharray="7 5" />
      <path d="M251 311L257.5 318L251 325" />
      <path d="M302.5 270V293" strokeDasharray="6 4" />
      <path d="M296 287L302.5 293.5L309 287" />
      <path d="M302.5 340V368H257.5V396" strokeDasharray="7 4" />
      <path d="M289 361L282 368L289 375" />
    </g>
    <text x={309} y={281} fontFamily={SLAB} fontWeight={700} fontSize={14}>
      W
    </text>
    {/* level valve */}
    <path d="M227.5 383H248L227.5 423H248Z" fill={PANEL_YELLOW} stroke="#000" strokeWidth={1} />
    <Instrument cx={200} cy={404} r={13} t="LV" size={12} />
    <g fill="none" stroke="#000" strokeWidth={1}>
      <rect x={254.5} y={396} width={6} height={11} fill={PANEL_YELLOW} />
      <path d="M268 390V416A12 13 0 0 0 268 390" />
      <path d="M257.5 407V416H279V402M263 418L268 413M274 402L279 398" />
    </g>
    {/* flow transmitter 2 */}
    <Instrument cx={312.5} cy={411} r={15} t="FT" sub="2" size={12} />
    <path d="M309.5 435V463M316 435V463" stroke="#000" strokeWidth={1.2} />
    {/* pump */}
    <rect x={355.5} y={445} width={18} height={6.5} fill="none" stroke="#000" strokeWidth={1} />
    <circle cx={389} cy={466.5} r={28} fill="none" stroke="#000" strokeWidth={1.2} />
    <path d="M369 486L360 500H420L408 486" fill="none" stroke="#000" strokeWidth={1.2} />
  </DiagramArt>
);

/* ---- trend chart, page coordinates too ---- */

const GRID_X = Array.from({ length: 20 }, (_, i) => 599 + 40 * i);
const GRID_Y = [46, 109, 172, 235, 298];
const AXIS = [
  ["65", 49],
  ["60", 112],
  ["55", 175],
  ["50", 238],
  ["45", 301],
] as const;

const LEGEND = [
  ["Niveau", 690, "#e0105f"],
  ["Sortie LIC", 850, "#ffffff"],
  ["Consigne", 1022, "#00ccff"],
  ["Debit entrée", 1192, "#ffff00"],
] as const;

const Chart = () => (
  <TrendArt width={825} height={285} viewBox="541 26 825 285">
    {LEGEND.map(([t, x, c]) => (
      <text key={t} x={x} y={39} fontFamily={ARIAL} fontSize={10.7} fill={c}>
        {t}
      </text>
    ))}
    {AXIS.map(([t, y]) => (
      <text key={t} x={548} y={y} fontFamily={ARIAL} fontSize={10.5} fill="#d8ece8">
        {t}
      </text>
    ))}
    <path d="M564.5 300V43.5H1366" fill="none" stroke="#d8d8d8" strokeWidth={1} />
    <g stroke="#000" strokeWidth={1.2}>
      {GRID_X.map((x) => (
        <path key={x} d={`M${x + 0.5} 44V298`} />
      ))}
      {GRID_Y.map((y) => (
        <path key={y} d={`M565 ${y + 0.5}H1366`} />
      ))}
    </g>
    <path d="M565 299.5H1366" stroke="#8a8a8a" strokeWidth={2} />
    <path d="M565 171H975.5V234M1170 234V171H1366" fill="none" stroke="#00ccff" strokeWidth={2} />
    <path
      d="M1171.5 204V225L1178 223L1190 222L1205 224L1225 230L1245 234L1262 236.5L1315 236L1322 235"
      fill="none"
      stroke="#fff"
      strokeWidth={2}
    />
    <polyline
      points="1170,235 1175,243 1180,248 1187,248.5 1193,246 1199,232 1208,214 1217,197 1225,183 1233,172 1241,163 1250,155 1263,149.5 1275,147.5 1290,149 1305,153 1320,157 1345,162 1366,165"
      fill="none"
      stroke="#ff0058"
      strokeWidth={2}
    />
    <path
      d="M565 234H1170L1176 229L1184 226L1196 224L1206 225L1225 229L1245 233L1262 236H1320L1366 235"
      fill="none"
      stroke="#ffff00"
      strokeWidth={2.2}
    />
  </TrendArt>
);

const VALUES = [
  { x: 285, y: 37, t: "50 %" },
  { x: 154, y: 127, t: "50. %" },
  { x: 162, y: 245, t: "55.5 %" },
  { x: 258, y: 217, t: "55. %" },
  { x: 372, y: 261, t: "50 %" },
  { x: 282, y: 345, t: "50. %" },
  { x: 154, y: 401, t: "50. %" },
];

const FIELDS = [
  ["Gain %", "14"],
  ["Ti (s)", "40"],
  ["Td (s)", "0.5"],
];

const App: React.FC = () => (
  <Page>
    <GlobalStyle />
    <TopBlock>
      <LeftStrip>
        <StripArt width={16} height={533} viewBox="0 0 16 533">
          <rect width={16} height={157} fill="#fff" />
          <path d="M0 7q8-2 13 1" fill="none" stroke="#000" strokeWidth={1.2} />
          <path d="M0 157H16V320L3 323H0Z" fill={WATER} />
          <g fill="none" stroke="#fff">
            {STRIP_BUBBLES.map(([x, y], i) => (
              <circle key={i} cx={x} cy={y} r={2.2} />
            ))}
          </g>
          <path d="M0 271H16M0 283H16M0 295H16M0 307H16" stroke="#000" strokeWidth={3} />
          <rect x={0} y={307} width={3} height={46} fill="#000" />
        </StripArt>
        <StripMenu>me</StripMenu>
        <StripSearch>Ta</StripSearch>
        <StripRest />
        <StripStatus>Je</StripStatus>
      </LeftStrip>
      <Workspace>
        <ToolRow>
          {TOOL_ICONS.map((icon, i) => (
            <ToolButton key={i}>{icon}</ToolButton>
          ))}
        </ToolRow>
        <Main>
          <DiagramPanel>
            <Diagram />
            <DiagramTitle>REGULATION UN ELEMENT</DiagramTitle>
            {VALUES.map((v, i) => (
              <ValueBox key={i} $x={v.x} $y={v.y}>
                {v.t}
              </ValueBox>
            ))}
            <ValueBox $x={236} $y={310} $w={28} $h={22}>
              Pid
            </ValueBox>
            <Alarm $x={165} $y={183}>
              <AlarmBox />
              Alarme haute
            </Alarm>
            <Alarm $x={164} $y={443}>
              <AlarmBox />
              Alarme basse
            </Alarm>
          </DiagramPanel>
          <Gutter />
          <RightPane>
            <Trend>
              <ZoomRail>
                <ZoomGroup>
                  <ZoomButton>+</ZoomButton>
                  <ZoomButton>-</ZoomButton>
                </ZoomGroup>
                <ZoomGroup>
                  <ZoomButton>+</ZoomButton>
                  <ZoomButton>-</ZoomButton>
                </ZoomGroup>
              </ZoomRail>
              <Chart />
            </Trend>
            <HScroll>
              <HScrollArrow>&lt;</HScrollArrow>
              <HScrollThumb />
            </HScroll>
            <DocPane>
              <DocBody>
                <DocTitle>Steamer, introduction</DocTitle>
                <IconRow $top={24} $align="flex-end">
                  <RowLabel $slot={321}>Fenêtre</RowLabel>
                  <svg width={32} height={23} viewBox="0 0 32 23">
                    <rect x={0.5} y={0.5} width={31} height={22} fill="#fff" stroke="#000" />
                    <rect x={0} y={0} width={8} height={23} fill="#0000ff" />
                    <rect x={8} y={1} width={23} height={6} fill="#008080" />
                  </svg>
                </IconRow>
                <IconRow $top={26} $align="center">
                  <RowLabel $slot={317}>Fenêtre</RowLabel>
                  <svg width={32} height={23} viewBox="0 0 32 23">
                    <rect x={0.5} y={0.5} width={31} height={22} fill="#fff" stroke="#000" />
                    <rect x={1} y={1} width={22} height={21} fill="#b8b8b8" />
                    <rect x={3} y={3} width={7} height={18} fill="#fff" stroke="#000" />
                    <rect x={4} y={11} width={6} height={9} fill="#0000e0" />
                    <circle cx={19} cy={14} r={3} fill="#0000e0" />
                    <rect x={23} y={1} width={8} height={7} fill="#008080" />
                  </svg>
                </IconRow>
                <DocParagraphs>
                  Steamer est un programme destiné à t'introduire aux bases de ce qu'on appelle en français la{" "}
                  <Accent>régulation</Accent> et en
                  <br />
                  anglais process control.
                  <br />
                  Cette discipline tire ses racines historiques du développement de la marine à vapeur, d'où le choix de ce nom.
                  <DocGap />
                  Les textes de cette fenêtre sont au format rtf. Vous pouvez les éditer ou même placer vos propres textes à ce
                  <br />
                  format dans le répertoire du programme. <Accent>Un clic droit</Accent> de souris ouvre alors un menu contenant les titres de ces
                  <br />
                  textes. Leur nombre est toutefois limité à une dizaine. Vous pouvez ainsi constituer une documentation
                  <br />
                  personnalisée.
                </DocParagraphs>
                <DocHeading>Navigation</DocHeading>
              </DocBody>
              <DocScroll>
                <DocThumb />
              </DocScroll>
            </DocPane>
          </RightPane>
        </Main>
        <StatusBar>
          <StatusMessage>Je partirai ! Steamer balançant ta mâture   (Mallarmé 1852-1892)</StatusMessage>
          <StatusCell $w={87}>AUTOMATIQUE</StatusCell>
          <StatusCell $w={68}>dy=</StatusCell>
          <StatusCell $w={64}>dt=</StatusCell>
          <StatusCell $w={60} $center>
            8 s/carreau
          </StatusCell>
        </StatusBar>
        <Taskbar time="12:38" badge="16" />
      </Workspace>
    </TopBlock>
    <Taskbar lower time="11:47" badge="24" />
    <Dialog>
      <DialogHead>
        Régulateur  PID
        <svg width={11} height={11} viewBox="0 0 11 11">
          <path d="M0.5 0.5l10 10M10.5 0.5l-10 10" stroke="#777" strokeWidth={1} />
        </svg>
      </DialogHead>
      <DialogBody>
        <div>
          <FieldColumn>
            {FIELDS.map(([name, value]) => (
              <FieldRow key={name}>
                <FieldLabel>{name}</FieldLabel>
                <FieldInput>{value}</FieldInput>
              </FieldRow>
            ))}
          </FieldColumn>
          <OkButton>OK</OkButton>
        </div>
        <ModeColumn>
          <ModeLabel>MODE</ModeLabel>
          <ModeSelect>
            P.I.D mixte
            <SelectArrow>▼</SelectArrow>
          </ModeSelect>
        </ModeColumn>
      </DialogBody>
    </Dialog>
  </Page>
);

export default App;
